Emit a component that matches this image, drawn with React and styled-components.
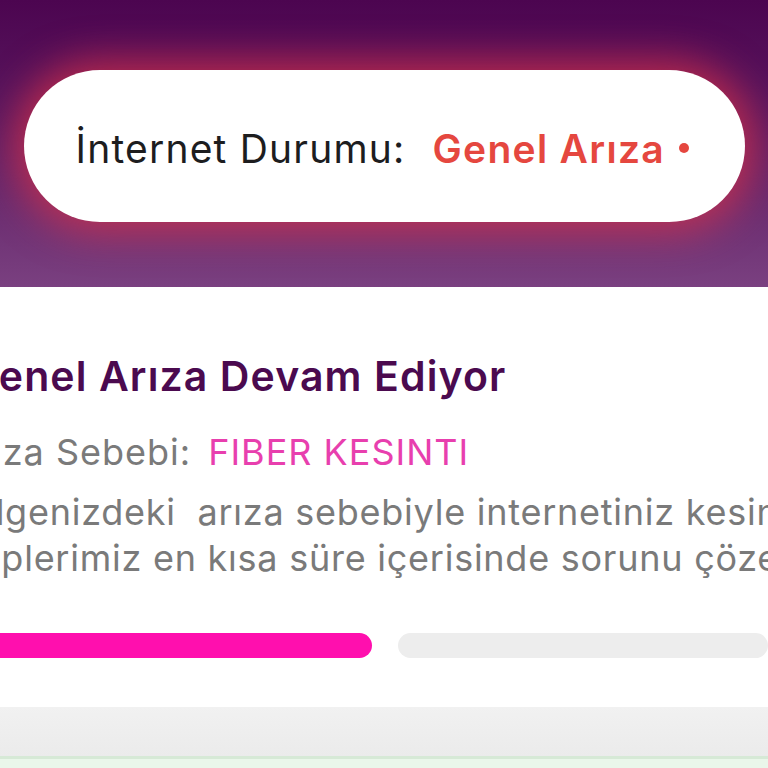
import React from 'react';
import styled, {createGlobalStyle} from 'styled-components';

const GlobalStyle = createGlobalStyle`
  html, body {
    margin: 0;
    padding: 0;
    background: #fff;
    overflow: hidden;
  }
  body {
    font-family: Inter, "Noto Sans", sans-serif;
    -webkit-font-smoothing: antialiased;
  }
`;

const Screen = styled.div`
  width: 768px;
  height: 768px;
  overflow: hidden;
  display: flex;
  flex-direction: column;
  background: #fff;
`;

const Header = styled.header`
  height: 287px;
  flex-shrink: 0;
  display: flex;
  align-items: center;
  justify-content: center;
  padding-top: 5px;
  box-sizing: border-box;
  background: linear-gradient(180deg, #4c0550 0%, #5a1860 40%, #7a4080 100%);
`;

const StatusPill = styled.div`
  width: 721px;
  height: 152px;
  box-sizing: border-box;
  border-radius: 76px;
  background: #fff;
  display: flex;
  align-items: center;
  padding: 4px 0 0 52px;
  gap: 27px;
  box-shadow: 0 0 38px 10px rgba(222, 50, 70, 0.72);
`;

const StatusLabel = styled.span`
  font-size: 39px;
  font-weight: 400;
  color: #1d1d1f;
  letter-spacing: 1.2px;
`;

const StatusValue = styled.span`
  font-size: 39px;
  font-weight: 600;
  color: ${props => props.color};
  letter-spacing: 1.3px;
  display: flex;
  align-items: center;
  gap: 14px;
  &::after {
    content: '';
    width: 10px;
    height: 10px;
    border-radius: 50%;
    background: ${props => props.color};
  }
`;

const Body = styled.section`
  flex: 1;
  display: flex;
  flex-direction: column;
  padding-top: 64px;
  margin-left: -48px;
`;

const Title = styled.h1`
  margin: 0;
  padding-left: 15px;
  font-size: 41px;
  font-weight: 600;
  color: #4b0a4f;
  letter-spacing: 1.1px;
  white-space: nowrap;
`;

const ReasonRow = styled.div`
  margin-top: 29px;
  display: flex;
  gap: 17px;
  font-size: 36px;
  letter-spacing: 1px;
  white-space: nowrap;
`;

const ReasonLabel = styled.span`
  color: #7a7a7a;
`;

const ReasonValue = styled.span`
  color: #e83fae;
`;

const Message = styled.p`
  margin: 15px 0 0 -3px;
  font-size: 36px;
  line-height: 46px;
  letter-spacing: 0.75px;
  color: #7a7a7a;
  white-space: pre;
`;

const Progress = styled.div`
  margin-top: 52px;
  display: flex;
  gap: 26px;
`;

const Segment = styled.div`
  height: 25px;
  border-radius: 13px;
  flex: ${props => props.grow};
  background: ${props => (props.active ? '#ff0fae' : '#ededed')};
`;

const Footer = styled.div`
  margin-top: auto;
  height: 49px;
  flex-shrink: 0;
  background: linear-gradient(180deg, #f1f1f1, #ebebeb);
  border-bottom: 3px solid #d6e9d6;
`;

const FooterTail = styled.div`
  height: 9px;
  flex-shrink: 0;
  background: #eaf6ea;
`;

export default function App() {
  return (
    <Screen>
      <GlobalStyle />
      <Header>
        <StatusPill>
          <StatusLabel>İnternet Durumu:</StatusLabel>
          <StatusValue color="#e5473f">Genel Arıza</StatusValue>
        </StatusPill>
      </Header>
      <Body>
        <Title>Genel Arıza Devam Ediyor</Title>
        <ReasonRow>
          <ReasonLabel>Arıza Sebebi:</ReasonLabel>
          <ReasonValue>FIBER KESINTI</ReasonValue>
        </ReasonRow>
        <Message>
          {'Bölgenizdeki  arıza sebebiyle internetiniz kesintiye uğramıştır.\nEkiplerimiz en kısa süre içerisinde sorunu çözecektir.'}
        </Message>
        <Progress>
          <Segment active grow="0 0 420px" />
          <Segment grow="1" />
        </Progress>
      </Body>
      <Footer />
      <FooterTail />
    </Screen>
  );
}
